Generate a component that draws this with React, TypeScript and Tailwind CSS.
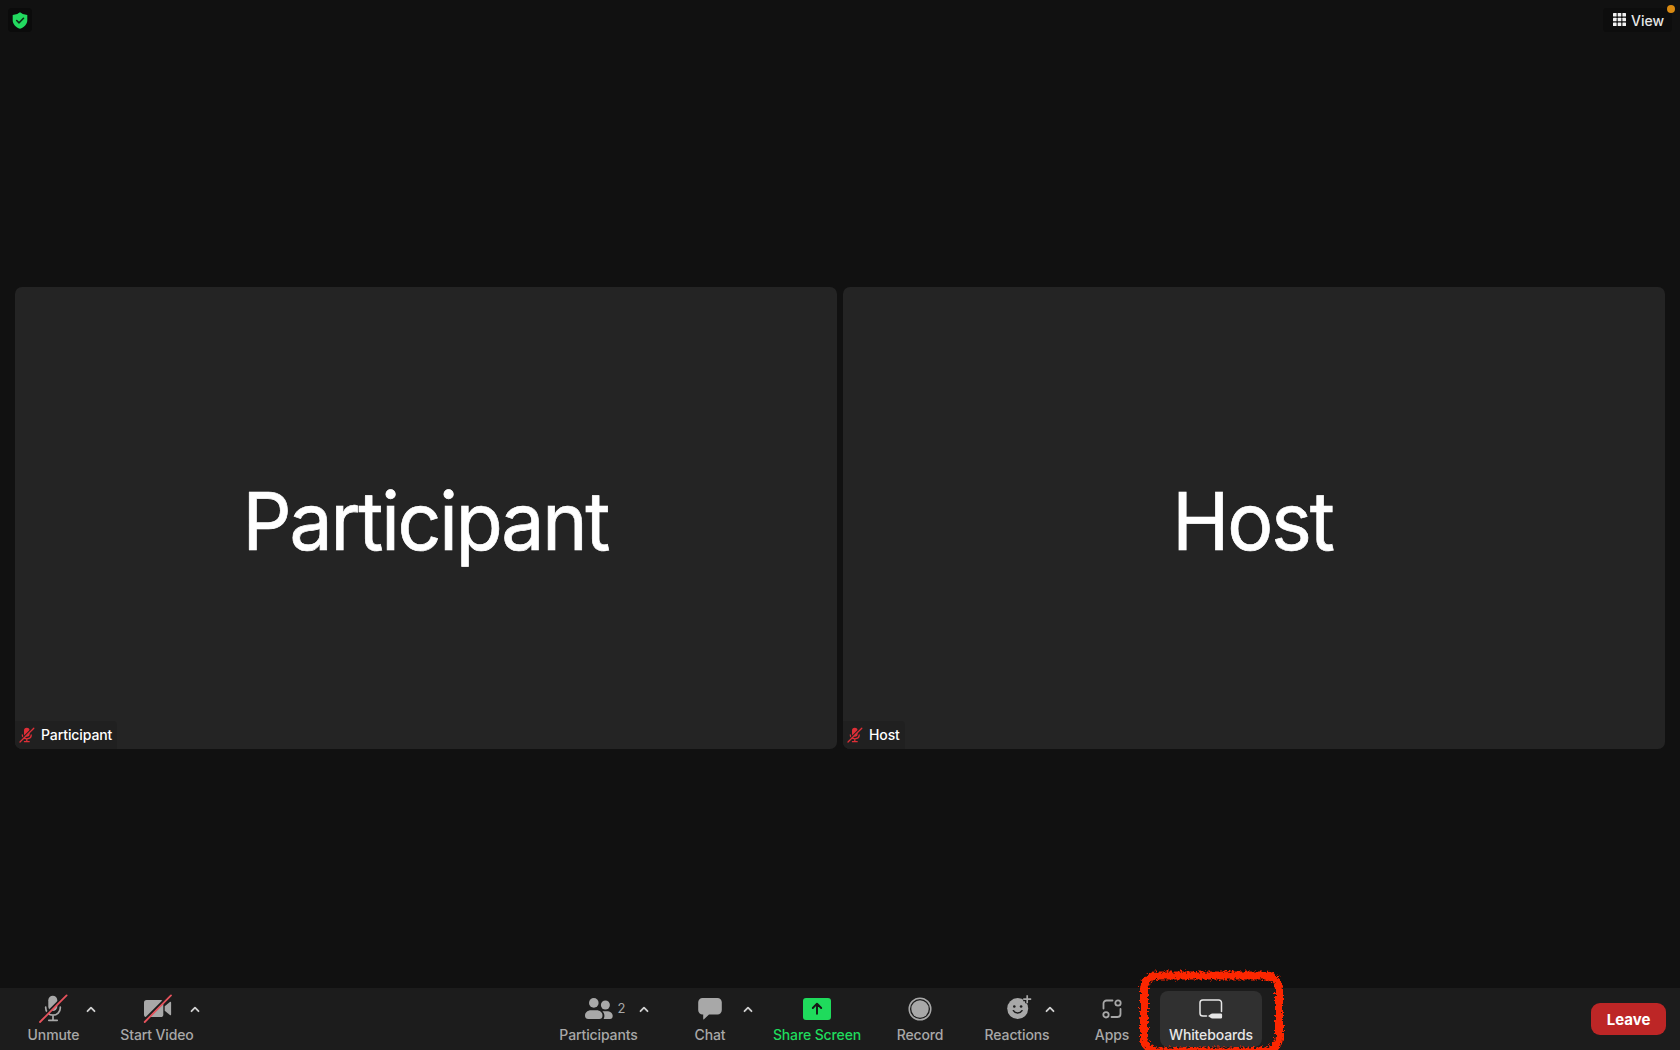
import type { ReactNode } from "react";

const GRAY = "#a8a8a8";

function Label({ children, className = "" }: { children: ReactNode; className?: string }) {
  return (
    <span className={`mt-[3px] block whitespace-nowrap text-center text-[14px] font-[450] leading-[18px] tracking-[-0.12px] ${className}`}>{children}</span>
  );
}

function Item({ width, icon, children, label = "" }: { width: string; icon: ReactNode; children: ReactNode; label?: string }) {
  return (
    <button className={`flex h-[62px] shrink-0 flex-col items-center pt-[6px] ${width}`}>
      <span className="relative flex h-[29px] items-center justify-center">{icon}</span>
      <Label className={label}>{children}</Label>
    </button>
  );
}

function Chevron({ className = "" }: { className?: string }) {
  return (
    <button className={`flex h-[29px] w-[14px] shrink-0 items-center justify-center ${className}`}>
      <svg width="14" height="14" viewBox="0 0 14 14" fill="none">
        <path d="M3.5 9.2 7 5.6l3.5 3.6" stroke="#d0d0d0" strokeWidth="1.8" strokeLinecap="round" strokeLinejoin="round" />
      </svg>
    </button>
  );
}

function MicOff() {
  return (
    <svg width="29" height="29" viewBox="0 0 29 29" fill="none">
      <rect x="9.3" y="1.8" width="9" height="15.2" rx="4.5" fill={GRAY} />
      <path d="M6.7 13.2v.7a7.3 7.3 0 0 0 14.6 0v-.7M14 21.2v5M9.8 26.3h8.4" stroke={GRAY} strokeWidth="1.7" strokeLinecap="round" />
      <path d="M.8 26.6 26.8.6" stroke="#1c1c1c" strokeWidth="2.8" />
      <path d="M1 28 27.6 1.4" stroke="#e5525c" strokeWidth="1.8" strokeLinecap="round" />
    </svg>
  );
}

function VideoOff() {
  return (
    <svg width="29" height="29" viewBox="0 0 29 29" fill="none">
      <rect x="1" y="6" width="19.3" height="17" rx="2.6" fill={GRAY} />
      <path d="m21.7 12.3 5.2-4.2q1.2-.8 1.2.6v11.6q0 1.4-1.2.6l-5.2-4.2z" fill={GRAY} />
      <path d="M.8 26.6 26.8.6" stroke="#1c1c1c" strokeWidth="2.4" />
      <path d="M1.7 28 28 1.4" stroke="#e5525c" strokeWidth="1.8" strokeLinecap="round" />
    </svg>
  );
}

function PeopleIcon() {
  return (
    <>
      <svg width="28" height="22" viewBox="0 0 28 22" fill={GRAY}>
        <circle cx="8.8" cy="4.9" r="4.8" />
        <circle cx="20.4" cy="7" r="4.5" />
        <path d="M0 17.5c0-3.1 2.8-5.2 6-5.2h5.6c3.2 0 5.9 2.1 5.9 5.2 0 2.4-1 3.5-3.2 3.5h-11C1.1 21 0 19.9 0 17.5Z" />
        <path d="M17.4 13.2h4.4c3.4 0 5.9 1.9 5.9 4.6 0 2.2-.9 3.2-2.8 3.2h-6.3c.6-.9.8-2.2.8-3.3 0-1.7-.7-3.3-2-4.5Z" />
      </svg>
      <span className="absolute left-[33px] top-[5px] text-[13px] leading-[18px] text-[#a8a8a8]">2</span>
    </>
  );
}

function ChatIcon() {
  return (
    <svg width="24" height="22" viewBox="0 0 24 22" fill={GRAY}>
      <path d="M4.5 0h15A4.3 4.3 0 0 1 23.8 4.3v7.8a4.3 4.3 0 0 1-4.3 4.3H11l-5 4.9q-.8.5-.8-.5v-4.4h-.7A4.3 4.3 0 0 1 .2 12.1V4.3A4.3 4.3 0 0 1 4.5 0Z" />
    </svg>
  );
}

function ShareIcon() {
  return (
    <svg width="28" height="22" viewBox="0 0 28 22" fill="none">
      <rect width="28" height="22" rx="3" fill="#1fdb5c" />
      <path d="M14 15.8V6M9.8 10 14 5.7 18.2 10" stroke="#151515" strokeWidth="1.9" strokeLinecap="round" strokeLinejoin="round" />
    </svg>
  );
}

function RecordIcon() {
  return (
    <svg width="24" height="24" viewBox="0 0 24 24" fill="none">
      <circle cx="12" cy="12" r="10.8" stroke={GRAY} strokeWidth="1.5" />
      <circle cx="12" cy="12" r="8.7" fill={GRAY} />
    </svg>
  );
}

function ReactionIcon() {
  return (
    <svg width="29" height="29" viewBox="0 0 29 29" fill="none">
      <circle cx="14.7" cy="14.6" r="10.5" fill={GRAY} />
      <circle cx="11.3" cy="12.5" r="1.3" fill="#1c1c1c" />
      <circle cx="18.1" cy="12.5" r="1.3" fill="#1c1c1c" />
      <path d="M10.4 16.7c1.8 3 6.8 3 8.6 0" stroke="#1c1c1c" strokeWidth="1.5" strokeLinecap="round" />
      <path d="M24.2 1.2v8M20.2 5.2h8" stroke="#1c1c1c" strokeWidth="4.2" />
      <path d="M24.2 1.2v8M20.2 5.2h8" stroke={GRAY} strokeWidth="1.7" />
    </svg>
  );
}

function AppsIcon() {
  return (
    <svg width="20" height="20" viewBox="0 0 20 20" fill="none" stroke={GRAY} strokeWidth="1.8">
      <path d="M1.5 9.5V4.5a3 3 0 0 1 3-3H10.5M18.5 10v5a3 3 0 0 1-3 3H9.5" strokeLinecap="round" />
      <circle cx="16" cy="4" r="2.7" />
      <circle cx="4" cy="15.8" r="2.7" />
    </svg>
  );
}

function WhiteboardIcon() {
  return (
    <svg width="24" height="20" viewBox="0 0 24 20" fill="none">
      <path d="M7.5 17H3.8A2.8 2.8 0 0 1 1 14.2V3.8A2.8 2.8 0 0 1 3.8 1h15.9a2.8 2.8 0 0 1 2.8 2.8v8.6" stroke="#e6e6e6" strokeWidth="1.5" strokeLinecap="round" />
      <path d="M9 17c1.5-.6 2.8-2.5 4.5-2.5h8.3a1.3 1.3 0 0 1 1.3 1.3v2.4a1.3 1.3 0 0 1-1.3 1.3h-8.3C11.8 19.5 10.5 17.6 9 17Z" fill="#e6e6e6" />
    </svg>
  );
}

function MutedMic() {
  return (
    <svg width="16" height="16" viewBox="0 0 16 16" fill="none" className="shrink-0">
      <rect x="5" y=".8" width="5.6" height="9" rx="2.8" fill="#df2f37" />
      <path d="M3.3 7.6c0 5.6 9 5.6 9 0M7.8 12v2.5M4.9 14.6h5.8" stroke="#df2f37" strokeWidth="1.3" />
      <path d="M.5 14 14 .5" stroke="#222" strokeWidth="1.3" />
      <path d="M1 15 14.8 1.2" stroke="#df2f37" strokeWidth="1.3" strokeLinecap="round" />
    </svg>
  );
}

function Tile({ name, nameClass, badgeClass }: { name: string; nameClass: string; badgeClass: string }) {
  return (
    <section className="relative flex w-[822px] items-center justify-center rounded-[7px] bg-[#242424]">
      <h2 className={`-translate-x-[1px] translate-y-[3px] scale-x-[0.96] whitespace-nowrap text-[80px] font-normal leading-[96px] text-white [-webkit-text-stroke:0.7px_white] ${nameClass}`}>{name}</h2>
      <div className={`absolute bottom-0 left-0 flex h-[28px] items-center gap-[6px] rounded-bl-[7px] rounded-tr-[4px] bg-[#202020] pl-[4px] text-[14px] font-medium leading-[20px] tracking-[-0.1px] text-white ${badgeClass}`}>
        <MutedMic />
        <span className="pb-[1px]">{name}</span>
      </div>
    </section>
  );
}

export default function App() {
  return (
    <div className="relative flex h-[1050px] w-[1680px] flex-col overflow-hidden bg-[#111111] font-['Inter',sans-serif]">
      <header className="flex h-[287px] shrink-0 items-start justify-between">
        <div className="ml-[8px] mt-[8px] flex h-[24px] w-[24px] items-center justify-center rounded-[4px] bg-[#0b0b0b]">
          <svg width="16" height="17" viewBox="0 0 16 17" fill="none">
            <path d="M8 .2 10.8 2l4.5 1v5.2c0 3.9-3.2 7-7.3 8.6C3.9 15.2.7 12.1.7 8.2V3l4.5-1z" fill="#22d95f" />
            <path d="m4.7 8.5 2.4 2.3 4.4-4.5" stroke="#0d2a16" strokeWidth="1.6" strokeLinecap="round" strokeLinejoin="round" />
          </svg>
        </div>
        <button className="relative mr-[8px] mt-[8px] flex h-[24px] w-[69px] items-center rounded-[4px] bg-[#0d0d0d] pl-[10px] text-[14px] font-[450] text-[#e6e6e6]">
          <svg width="13" height="13" viewBox="0 0 13 13" fill="#f2f2f2" className="mb-[1px] mr-[5px]">
            {[0, 4.7, 9.4].map((y) => [0, 4.7, 9.4].map((x) => <rect key={`${x}-${y}`} x={x} y={y} width="3.6" height="3.6" rx=".5" />))}
          </svg>
          View
          <span className="absolute -right-[3px] -top-[3px] h-[8px] w-[8px] rounded-full bg-[#d98a12]" />
        </button>
      </header>

      <main className="mx-[15px] flex h-[462px] shrink-0 gap-[6px]">
        <Tile name="Participant" nameClass="tracking-[-2.3px]" badgeClass="w-[102px]" />
        <Tile name="Host" nameClass="tracking-[-2.2px]" badgeClass="w-[62px]" />
      </main>

      <footer className="mt-auto flex h-[62px] shrink-0 items-start bg-[#1c1c1c] text-[#a8a8a8]">
        <Item width="ml-[23px] w-[61px]" icon={<MicOff />}>Unmute</Item>
        <Chevron className="mt-[6px]" />
        <Item width="ml-[21px] w-[76px]" icon={<VideoOff />}>Start Video</Item>
        <Chevron className="-ml-[7px] mt-[6px]" />
        <Item width="ml-[355px] w-[83px]" icon={<PeopleIcon />}>Participants</Item>
        <Chevron className="-ml-[3px] mt-[6px]" />
        <Item width="ml-[39px] w-[40px]" icon={<ChatIcon />}>Chat</Item>
        <Chevron className="ml-[11px] mt-[6px]" />
        <Item width="ml-[16px] w-[92px]" icon={<ShareIcon />} label="text-[#1fdb5c]">Share Screen</Item>
        <Item width="ml-[27px] w-[60px]" icon={<RecordIcon />}>Record</Item>
        <Item width="ml-[32px] w-[70px]" icon={<ReactionIcon />}>Reactions</Item>
        <Chevron className="-ml-[9px] mt-[6px]" />
        <Item width="ml-[35px] w-[40px]" icon={<AppsIcon />}>Apps</Item>
        <button className="ml-[28px] mt-[3px] flex h-[56px] w-[102px] shrink-0 flex-col items-center rounded-[8px] bg-[#303030] pt-[3px] text-[#e6e6e6]">
          <span className="flex h-[29px] items-center"><WhiteboardIcon /></span>
          <Label>Whiteboards</Label>
        </button>
        <button className="ml-auto mr-[14px] mt-[15px] h-[32px] w-[75px] rounded-[9px] bg-[#bd2626] pt-[2px] text-[15px] font-bold text-white">Leave</button>
      </footer>

      {/* Hand-drawn highlight over the whiteboards button */}
      <svg width="160" height="90" viewBox="0 0 160 90" fill="none" className="pointer-events-none absolute bottom-0 left-[1130px]">
        <filter id="crayon" x="0" y="0" width="160" height="90" filterUnits="userSpaceOnUse">
          <feTurbulence type="fractalNoise" baseFrequency="0.4" numOctaves="3" seed="4" result="noise" />
          <feDisplacementMap in="SourceGraphic" in2="noise" scale="7" xChannelSelector="R" yChannelSelector="G" />
        </filter>
        <rect x="14" y="15.5" width="135" height="76" rx="14" stroke="#fc2605" strokeWidth="8" filter="url(#crayon)" />
      </svg>
    </div>
  );
}
